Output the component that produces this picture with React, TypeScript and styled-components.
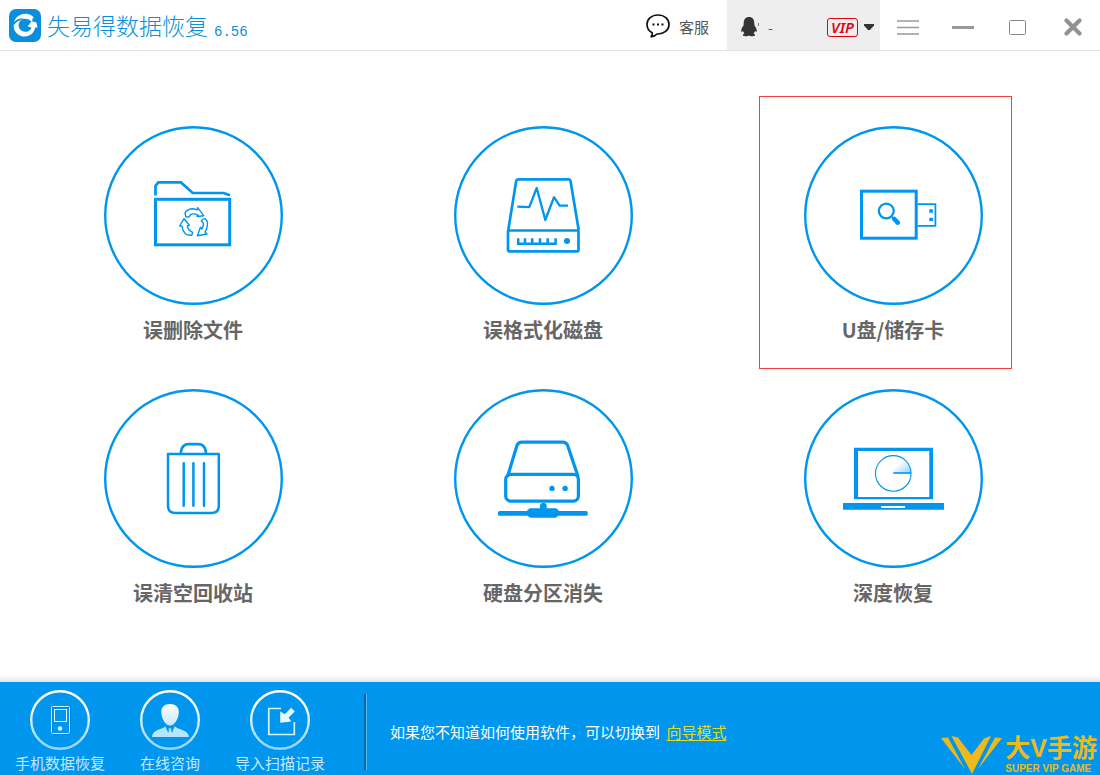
import React from "react";
import styled, { createGlobalStyle } from "styled-components";

const blue = "#0096ed";
const sans = `"Noto Sans CJK SC", "Noto Sans", sans-serif`;

const GlobalStyle = createGlobalStyle`
  *, *::before, *::after { box-sizing: border-box; }
  body { margin: 0; background: #fff; font-family: ${sans}; }
  button { margin: 0; padding: 0; border: 0; background: none; font-family: inherit; cursor: pointer; }
  svg { display: block; flex: none; }
`;

const Window = styled.div`
  display: flex;
  flex-direction: column;
  min-height: 100vh;
`;

const TitleBar = styled.header`
  display: flex;
  align-items: stretch;
  height: 51px;
  border-bottom: 1px solid #e3e3e3;
`;

const Brand = styled.div`
  display: flex;
  align-items: center;
  gap: 6px;
  padding-left: 9px;
  color: #0a8fdc;
`;

const BrandName = styled.h1`
  margin: 0;
  font-size: 23px;
  font-weight: 300;
  line-height: 48px;
  white-space: nowrap;
`;

const Version = styled.span`
  padding-top: 14px;
  font-family: "Liberation Mono", monospace;
  font-size: 14px;
  line-height: 20px;
`;

const Actions = styled.div`
  display: flex;
  margin-left: auto;
`;

const ServiceButton = styled.button`
  display: flex;
  align-items: center;
  gap: 9px;
  padding: 2px 18px 0 0;
  color: #555;
  font-size: 15px;
`;

const AccountButton = styled.button`
  display: flex;
  align-items: center;
  width: 153px;
  padding: 4px 6px 0 14px;
  background: #eee;
  color: #555;
  font-size: 14px;
`;

const AccountName = styled.span`
  margin: 0 auto 0 9px;
`;

const VipBadge = styled.span`
  width: 31px;
  height: 19px;
  margin-right: 6px;
  border: 1px solid #e60012;
  border-radius: 3px;
  color: #e60012;
  font: italic 600 15px/17px "Noto Sans", sans-serif;
  text-align: center;
`;

const WindowControls = styled.div`
  display: flex;
`;

const ControlButton = styled.button`
  display: flex;
  align-items: center;
  justify-content: center;
  width: 55px;
  padding-top: 4px;
`;

const Main = styled.main`
  position: relative;
  flex: 1;
  padding: 74px 32px 75px 18px;

  &::after {
    content: "";
    position: absolute;
    left: 0;
    right: 0;
    bottom: 0;
    height: 7px;
    background: linear-gradient(#fff, #e4e4e4);
  }
`;

const TileGrid = styled.div`
  display: grid;
  grid-template-columns: repeat(3, 1fr);
  row-gap: 44px;
  justify-items: center;
`;

const Tile = styled.button`
  position: relative;
  display: flex;
  flex-direction: column;
  align-items: center;
  gap: 11px;
  color: #666;
`;

const TileLabel = styled.span`
  font-size: 20px;
  font-weight: 700;
  line-height: 28px;
  white-space: nowrap;
`;

const Highlight = styled.span`
  position: absolute;
  top: -29px;
  right: -29px;
  bottom: -25px;
  left: -44px;
  border: 1px solid #f93f3b;
`;

const Footer = styled.footer`
  display: flex;
  height: 93px;
  background: ${blue};
`;

const Shortcuts = styled.nav`
  display: flex;
  padding: 8px 29px 0 5px;
`;

const Shortcut = styled.button`
  display: flex;
  flex-direction: column;
  align-items: center;
  width: 110px;
  color: #c5e9ff;
  font-size: 15px;
  line-height: 25px;
  white-space: nowrap;
`;

const Divider = styled.div`
  width: 3px;
  margin: 12px 0 5px;
  border-left: 2px solid #0068a9;
  border-right: 1px solid #4db9f5;
`;

const Hint = styled.p`
  margin: 0 0 0 23px;
  padding-top: 6px;
  align-self: center;
  color: #fff;
  font-size: 15px;
  line-height: 22px;
`;

const GuideLink = styled.a`
  margin-left: 3px;
  color: #e3dc1b;
  text-underline-offset: 2px;
`;

const Partner = styled.div`
  display: flex;
  align-items: flex-end;
  align-self: flex-end;
  gap: 3px;
  margin-left: auto;
  padding-right: 3px;
  color: #edb91c;
`;

const PartnerText = styled.div`
  display: flex;
  flex-direction: column;
`;

const PartnerName = styled.strong`
  font-family: "Liberation Sans", ${sans};
  font-size: 25px;
  line-height: 30px;
  white-space: nowrap;
`;

const PartnerTag = styled.span`
  font: 700 10px/12px "Liberation Sans", sans-serif;
  white-space: nowrap;
`;

const Ring = ({ children }: { children: React.ReactNode }) => (
  <svg width="180" height="180" viewBox="0 0 180 180" fill="none" stroke={blue} strokeWidth="2.7" aria-hidden="true">
    <circle cx="90.5" cy="90.5" r="88.3" strokeWidth="2.4" />
    {children}
  </svg>
);

const FolderArt = () => (
  <Ring>
    <path d="M52.5 70.5V60.8L55.4 57.4H78L89.7 68H120.5L127 70.2" />
    <rect x="52.5" y="74.3" width="74.2" height="45.5" strokeWidth="3" />
    <g strokeWidth="1.4" strokeLinejoin="round">
      <path d="M83 92L82 88.3Q83 84.6 88.7 83.7Q91.5 83.8 94.3 84.9L94.7 82.7L100.7 90.7L94 91.5L95 90Q91 88.2 87.7 89.3L86.3 91.7Z" />
      <path d="M98.3 96Q100 93.4 101.7 93.7Q104.6 95 104.5 99Q104.3 104 102 107L104 109L94.3 110.7L97.5 102.3L99 104Q101 100 100.3 98Z" />
      <path d="M76.7 101L81 93.7L86.3 100.3L84.3 100.7Q85 105.5 89.7 107.3L88.7 110.3Q80.5 110.8 79 101.3Z" />
    </g>
  </Ring>
);

const DiskArt = () => (
  <Ring>
    <path d="M55.3 105L63.2 55.9Q63.5 54.4 65 54.4H115.7Q117.2 54.4 117.5 55.9L125.7 105" />
    <rect x="55" y="105.5" width="70.5" height="20.8" rx="1" />
    <path d="M64.3 81.6L76.3 82.2L83.7 63L92.3 95L101 72.2L106.6 80.7H115" strokeWidth="2.3" strokeLinejoin="round" />
    <path d="M65.2 113.3V118.8H102.6V113.3M72 113.3V119M79.2 113.3V119M87 113.3V119M94.7 113.3V119" strokeWidth="2.5" />
    <circle cx="114" cy="116" r="3" fill={blue} stroke="none" />
  </Ring>
);

const UsbArt = () => (
  <Ring>
    <rect x="58.5" y="66.2" width="54.7" height="47" strokeWidth="3" />
    <path d="M114.5 79.2H132.4V100.8H114.5" strokeWidth="1.8" />
    <path d="M126.3 84.3h3.6v3.4h-3.6zM126.3 92.7h3.6v3.4h-3.6z" fill={blue} stroke="none" />
    <circle cx="83.3" cy="86" r="7.4" strokeWidth="2.3" />
    <path d="M88.5 91.5L91.5 94.5" strokeWidth="1.5" />
    <path d="M91.2 94L94.8 97.7" strokeWidth="4.6" strokeLinecap="round" />
  </Ring>
);

const TrashArt = () => (
  <Ring>
    <path d="M65 66H115.8V117.5Q115.8 125 108.5 125H72.3Q65 125 65 117.5Z" strokeWidth="2.5" strokeLinejoin="round" />
    <path d="M78 65.5V63Q79.5 56.2 85.5 56.2H95.5Q101.3 56.2 102.8 63V65.5" />
    <path d="M80.7 75.2V117.8M90.4 75.2V117.8M101 75.2V117.8" strokeWidth="2.5" strokeLinecap="round" />
  </Ring>
);

const NetworkDriveArt = () => (
  <Ring>
    <path d="M54.4 89L63.8 58Q65 54.1 69 54.1H109.6Q113.6 54.1 114.8 58L125.2 89" strokeWidth="3.2" />
    <rect x="52.7" y="86.4" width="72.7" height="26.7" rx="5" strokeWidth="3.2" />
    <g fill={blue} stroke="none">
      <circle cx="99" cy="100.4" r="2.7" />
      <circle cx="112.1" cy="100.4" r="2.7" />
      <rect x="45" y="123" width="89.7" height="4.8" rx="1.5" />
      <rect x="87" y="115" width="6.7" height="8" rx="3" />
      <path d="M77 120.3H103Q106.3 122 106.3 125Q106 128 102.5 129.8H77.5Q73.8 128 73.5 125Q73.5 122 77 120.3Z" />
    </g>
  </Ring>
);

const LaptopArt = () => (
  <Ring>
    <defs>
      <linearGradient id="sweep" x1="1" y1="1" x2="0.3" y2="0.2">
        <stop offset="0" stopColor={blue} stopOpacity="0.45" />
        <stop offset="0.8" stopColor={blue} stopOpacity="0" />
      </linearGradient>
    </defs>
    <path d="M51 59.7H130V111.3H51ZM55 63V109H126.3V63Z" fill={blue} fillRule="evenodd" stroke="none" />
    <path d="M40 115H141V121.7H40Z" fill={blue} stroke="none" />
    <rect x="78" y="118" width="24.3" height="2" rx="1" fill="#fff" stroke="none" />
    <path d="M90.3 85V67.5A17.7 17.7 0 0 1 108 85Z" fill="url(#sweep)" stroke="none" />
    <circle cx="90.3" cy="85.4" r="17.8" strokeWidth="1.1" />
    <path d="M90.3 85H108" strokeWidth="1.6" />
  </Ring>
);

const LogoMark = () => (
  <svg width="32" height="33" viewBox="0 0 32 33" aria-hidden="true">
    <rect width="32" height="33" rx="7" fill="#0a8fdc" />
    <path d="M4.6 16.5C4.6 9.8 9.8 4.8 16.2 4.8C20.8 4.8 25 7.4 26.8 11.6L28.6 18.4L26.2 18.6C25.2 23.8 21 27.6 16 27.6C9.6 27.6 4.6 23 4.6 16.5Z" fill="#fff" />
    <path d="M9.6 15.8C9.8 12.6 12.4 10 16.2 9.8C18.6 9.8 20.8 10.8 22.4 12.4L18.6 17.6L22.6 18.4C21.4 21.4 19 22.8 16.4 22.8C12.4 22.8 9.4 19.8 9.6 15.8Z" fill="#0a8fdc" />
    <path d="M3.8 14.6Q9 7.4 17.4 10.6Q9.4 9.8 4.6 16.4Z" fill="#0a8fdc" />
    <path d="M24 8.2L29 12L27.6 13.6L23 12.2Z" fill="#0a8fdc" />
  </svg>
);

const ChatIcon = () => (
  <svg width="24" height="24" viewBox="0 0 24 24" aria-hidden="true">
    <path d="M12 1C5.7 1 1 5 1 10.5C1 14.5 3.2 17.2 6.3 18.8Q6.5 21 5 22.7Q9 22.3 11 20C18 20.3 23 16 23 10.5C23 5 18.3 1 12 1Z" fill="none" stroke="#111" strokeWidth="1.7" strokeLinejoin="round" />
    <path d="M6.5 9.5h2v2h-2zM11 9.5h2v2h-2zM15.5 9.5h2v2h-2z" fill="#111" />
  </svg>
);

const PenguinIcon = () => (
  <svg width="18" height="20" viewBox="0 0 18 20" fill="#333" aria-hidden="true">
    <path d="M8 0C4.5 0 2.6 2.7 2.7 6.5L2.5 8.5C1 10.5 0 12.5 .3 14.5C.6 15.5 1.5 14.6 2 14C2.3 15 2.8 15.8 3.5 16.6C1.5 17.3 1.2 19.3 4.5 19.3C6.5 19.3 7.5 18.7 8 18.2C8.5 18.7 9.5 19.3 11.5 19.3C14.8 19.3 14.5 17.3 12.5 16.6C13.2 15.8 13.7 15 14 14C14.5 14.6 15.4 15.5 15.7 14.5C16 12.5 15 10.5 13.5 8.5L13.3 6.5C13.4 2.7 11.5 0 8 0Z" />
    <path d="M17 6h1v3h-1z" opacity="0.6" />
  </svg>
);

const CaretIcon = () => (
  <svg width="10" height="6" viewBox="0 0 10 6" aria-hidden="true">
    <path d="M0 0H10V1.5L6 6H4L0 1.5Z" fill="#333" />
  </svg>
);

const RoundArt = ({ id, children }: { id: string; children: React.ReactNode }) => (
  <svg width="60" height="60" viewBox="0 0 60 60" fill="none" aria-hidden="true">
    <defs>
      <linearGradient id={id} gradientUnits="userSpaceOnUse" x1="0" y1="0" x2="0" y2="60">
        <stop offset="0.2" stopColor="#fff" />
        <stop offset="1" stopColor="#8fd3fb" />
      </linearGradient>
    </defs>
    <circle cx="30" cy="30" r="28.8" stroke={`url(#${id})`} strokeWidth="2.4" />
    {children}
  </svg>
);

const PhoneArt = () => (
  <RoundArt id="phone">
    <rect x="22" y="17" width="18" height="27" rx="1" stroke="#0077c0" />
    <rect x="21.5" y="16.5" width="18" height="27" rx="1" stroke="#d4effe" />
    <rect x="24.5" y="19.5" width="12" height="12" stroke="#eaf7ff" />
    <circle cx="30" cy="38.5" r="2.2" fill="#dff3ff" />
  </RoundArt>
);

const PersonArt = () => (
  <RoundArt id="person">
    <path d="M30 14C24.5 14 21 17 21.3 22.5C21.6 29 25.5 35.5 30 35.5C34.5 35.5 38.5 29 38.8 22.5C39.1 17 35.5 14 30 14Z" fill="url(#person)" />
    <path d="M12 47C12.5 42.5 15 41 19 39.5C22 38.3 24 38 25.3 36.2L28.2 43L29 40L28.3 38.5H31.7L31 40L32 43L34.7 36.2C36 38 38 38.3 41 39.5C45.5 41.3 48.5 42.5 49 47Z" fill="#b9e4fd" />
  </RoundArt>
);

const ImportArt = () => (
  <RoundArt id="import">
    <path d="M31 18.5H18.8V44.5H44.3V32" stroke="#d5f3f8" strokeWidth="1.7" />
    <path d="M41.2 17.8L44.8 21.4L38.6 27.6L41.3 31.5L30.2 32.7V21.5L34.8 24.2Z" fill="#e9f7ff" />
  </RoundArt>
);

const PartnerMark = () => (
  <svg width="61" height="39" viewBox="0 0 61 39" fill="#edb91c" aria-hidden="true">
    <path d="M0 2L7 1.5L24 33Z" />
    <path d="M10.5 0L17 1.5L30.5 19L43 2.5L50 0L31 38Z" />
    <path d="M54 1.5L61 2L37 33Z" />
  </svg>
);

const tiles = [
  { label: "误删除文件", Art: FolderArt },
  { label: "误格式化磁盘", Art: DiskArt },
  { label: "U盘/储存卡", Art: UsbArt, highlighted: true },
  { label: "误清空回收站", Art: TrashArt },
  { label: "硬盘分区消失", Art: NetworkDriveArt },
  { label: "深度恢复", Art: LaptopArt },
];

const shortcuts = [
  { label: "手机数据恢复", Art: PhoneArt },
  { label: "在线咨询", Art: PersonArt },
  { label: "导入扫描记录", Art: ImportArt },
];

export default function App() {
  return (
    <Window>
      <GlobalStyle />
      <TitleBar>
        <Brand>
          <LogoMark />
          <BrandName>失易得数据恢复</BrandName>
          <Version>6.56</Version>
        </Brand>
        <Actions>
          <ServiceButton>
            <ChatIcon />
            客服
          </ServiceButton>
          <AccountButton>
            <PenguinIcon />
            <AccountName>-</AccountName>
            <VipBadge>VIP</VipBadge>
            <CaretIcon />
          </AccountButton>
          <WindowControls>
            <ControlButton aria-label="菜单">
              <svg width="22" height="15" viewBox="0 0 22 15" stroke="#999">
                <path d="M0 1H22M0 7.5H22M0 14H22" strokeWidth="1.3" />
              </svg>
            </ControlButton>
            <ControlButton aria-label="最小化">
              <svg width="22" height="3" viewBox="0 0 22 3">
                <path d="M0 0H22V3H0Z" fill="#999" />
              </svg>
            </ControlButton>
            <ControlButton aria-label="最大化">
              <svg width="17" height="15" viewBox="0 0 17 15">
                <rect x="0.5" y="0.5" width="16" height="14" rx="1" fill="none" stroke="#888" />
              </svg>
            </ControlButton>
            <ControlButton aria-label="关闭">
              <svg width="18" height="18" viewBox="0 0 18 18">
                <path d="M2.5 2.5L15.5 15.5M15.5 2.5L2.5 15.5" stroke="#929292" strokeWidth="4.2" strokeLinecap="round" />
              </svg>
            </ControlButton>
          </WindowControls>
        </Actions>
      </TitleBar>

      <Main>
        <TileGrid>
          {tiles.map(({ label, Art, highlighted }) => (
            <Tile key={label}>
              <Art />
              <TileLabel>{label}</TileLabel>
              {highlighted && <Highlight />}
            </Tile>
          ))}
        </TileGrid>
      </Main>

      <Footer>
        <Shortcuts>
          {shortcuts.map(({ label, Art }) => (
            <Shortcut key={label}>
              <Art />
              {label}
            </Shortcut>
          ))}
        </Shortcuts>
        <Divider />
        <Hint>
          如果您不知道如何使用软件，可以切换到 <GuideLink href="#guide">向导模式</GuideLink>
        </Hint>
        <Partner>
          <PartnerMark />
          <PartnerText>
            <PartnerName>大V手游</PartnerName>
            <PartnerTag>SUPER VIP GAME</PartnerTag>
          </PartnerText>
        </Partner>
      </Footer>
    </Window>
  );
}
